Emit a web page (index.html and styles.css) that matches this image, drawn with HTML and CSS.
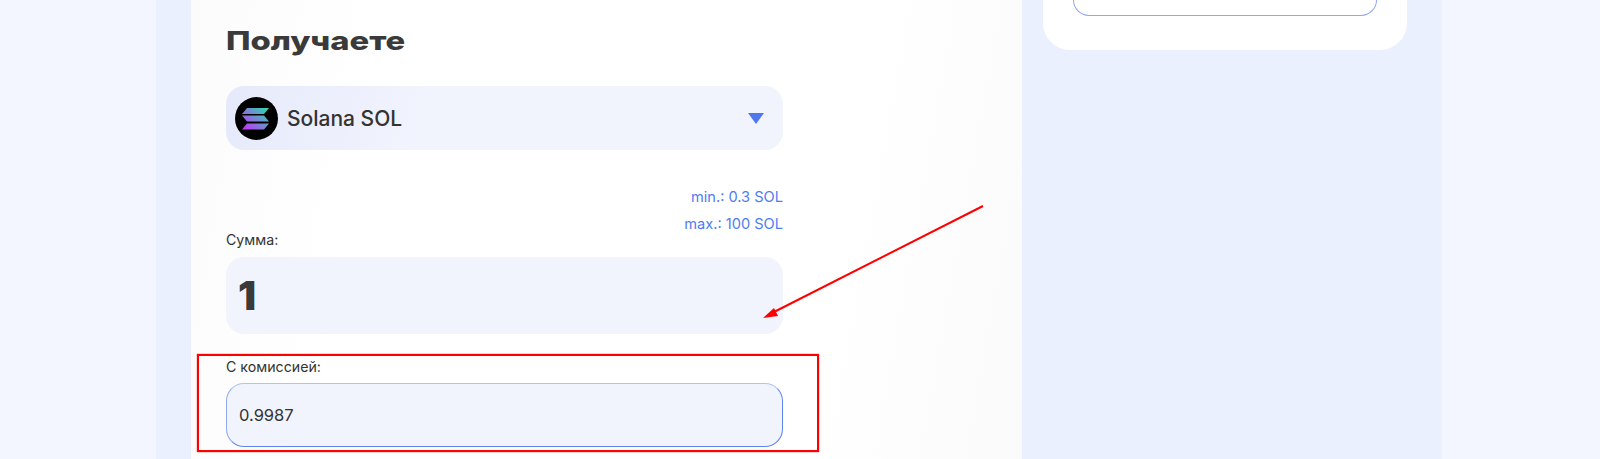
FILE: index.html
```html
<!DOCTYPE html>
<html lang="en">
<head>
  <meta charset="UTF-8" />
  <meta name="viewport" content="width=device-width, initial-scale=1.0" />
  <title>Получаете</title>
  <link rel="stylesheet" href="styles.css">
</head>
<body>

<div class="page">
  <div class="form-card">
    <h2 class="title">Получаете</h2>

    <div class="select">
      <svg class="coin" width="43" height="43" viewBox="0 0 43 43">
        <defs>
          <linearGradient id="sol" gradientUnits="userSpaceOnUse" x1="36" y1="8" x2="10" y2="35">
            <stop offset="0" stop-color="#19f0a8" />
            <stop offset="0.5" stop-color="#6f8fd0" />
            <stop offset="1" stop-color="#c82ff5" />
          </linearGradient>
        </defs>
        <circle cx="21.5" cy="21.5" r="21.5" fill="#000" />
        <polygon points="12,11 34,11 29,17 7,17" fill="url(#sol)" />
        <polygon points="7,18.5 29,18.5 34,24.5 12,24.5" fill="url(#sol)" />
        <polygon points="12,26.5 34,26.5 29,32.5 7,32.5" fill="url(#sol)" />
      </svg>
      <span class="coin-name">Solana SOL</span>
      <span class="caret"></span>
    </div>

    <div class="limits">
      <div>min.: 0.3 SOL</div>
      <div>max.: 100 SOL</div>
    </div>

    <div class="label label-sum">Сумма:</div>
    <div class="field field-big">1</div>

    <div class="label label-fee">С комиссией:</div>
    <div class="field field-fee">0.9987</div>
  </div>

  <div class="side">
    <div class="side-card">
      <div class="side-input"></div>
    </div>
  </div>
</div>

<!-- annotations drawn over the screenshot -->
<div class="mark-box"></div>
<svg class="mark-arrow" width="1600" height="459" viewBox="0 0 1600 459">
  <line x1="983" y1="206" x2="772" y2="313" stroke="#f00" stroke-width="2" />
  <polygon points="763,318 774,308 778,316" fill="#f00" />
</svg>

</body>
</html>
```

FILE: styles.css
```css
* { box-sizing: border-box; }
html, body {
  margin: 0;
  height: 459px;
  overflow: hidden;
}
body {
  font-family: Inter, 'Noto Sans', sans-serif;
  background: #f3f6ff;
  color: #333;
  position: relative;
}
.page {
  width: 1286px;
  height: 459px;
  margin-left: 156px;
  padding: 0 35px;
  background: #eaf0fe;
  display: flex;
  gap: 21px;
}
.form-card {
  width: 831px;
  height: 459px;
  padding: 0 239px 0 35px;
  background: linear-gradient(100deg, #fbfbfb 0%, #ffffff 22%, #ffffff 75%, #fafafa 100%);
}
.title {
  margin: 0;
  padding-top: 26px;
  height: 86px;
  font-size: 26px;
  line-height: 30px;
  font-weight: 800;
  color: #3a3a3a;
  transform: scaleX(1.26);
  transform-origin: left center;
}
.select {
  height: 64px;
  padding: 0 19px 0 9px;
  border-radius: 18px;
  background: linear-gradient(110deg, #e6e9fa 0%, #f1f4fd 35%, #f1f4fd 100%);
  display: flex;
  align-items: center;
  gap: 9px;
}
.coin-name {
  flex: 1;
  font-size: 21px;
  font-weight: 500;
  color: #333;
}
.caret {
  width: 0;
  height: 0;
  border-left: 8px solid transparent;
  border-right: 8px solid transparent;
  border-top: 11px solid #4f78ee;
}
.limits {
  padding-top: 34px;
  height: 82px;
  text-align: right;
  font-size: 14.6px;
  line-height: 27px;
  color: #4f7cf5;
}
.label {
  font-size: 14.2px;
  line-height: 16px;
  color: #333;
}
.label-sum {
  height: 25px;
}
.label-fee {
  margin-top: 25px;
  height: 24px;
}
.field {
  border-radius: 18px;
  background: #f1f4fd;
  display: flex;
  align-items: center;
  padding-left: 12px;
}
.field-big {
  height: 77px;
  font-size: 40px;
  font-weight: 900;
  color: #3a3a3a;
}
.field-fee {
  height: 64px;
  font-size: 16.5px;
  color: #333;
  border: 1px solid;
  border-color: #b0c3f6 #5f86ef #5f86ef #8fa9f2;
}
.side-card {
  width: 364px;
  height: 50px;
  padding: 0 30px;
  border-radius: 0 0 27px 27px;
  background: #fff;
}
.side-input {
  height: 16px;
  border: 1px solid #8ea8f3;
  border-top: none;
  border-radius: 0 0 16px 16px;
}
.mark-box {
  position: absolute;
  left: 197px;
  top: 354px;
  width: 622px;
  height: 98px;
  border: 2px solid #f00;
  box-shadow: 0 0 1px #f00;
}
.mark-arrow {
  position: absolute;
  left: 0;
  top: 0;
}
```
